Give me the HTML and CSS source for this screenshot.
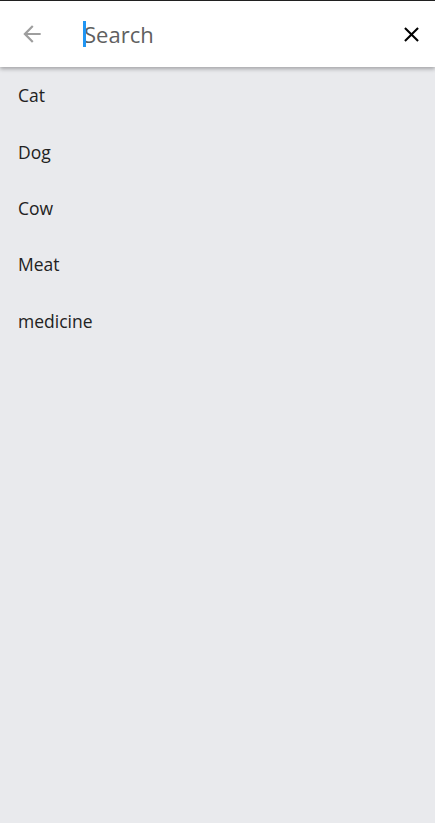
FILE: index.html
```html
<!DOCTYPE html>
<html>
<head>
<meta charset="utf-8">
<link rel="stylesheet" href="styles.css">
</head>
<body>
<div class="app">
  <header class="bar">
    <button class="icon back" aria-label="Back">
      <svg width="26" height="26" viewBox="0 0 24 24"><path d="M20 11H7.83l5.59-5.59L12 4l-8 8 8 8 1.41-1.41L7.83 13H20v-2z" fill="#9e9e9e"/></svg>
    </button>
    <div class="field"><span class="caret"></span><span class="placeholder">Search</span></div>
    <button class="icon close" aria-label="Clear">
      <svg width="25" height="25" viewBox="0 0 24 24"><path d="M19 6.41L17.59 5 12 10.59 6.41 5 5 6.41 10.59 12 5 17.59 6.41 19 12 13.41 17.59 19 19 17.59 13.41 12z" fill="#000"/></svg>
    </button>
  </header>
  <ul class="list">
    <li>Cat</li>
    <li>Dog</li>
    <li>Cow</li>
    <li>Meat</li>
    <li>medicine</li>
  </ul>
</div>
</body>
</html>
```
FILE: styles.css
```css
html, body { margin: 0; padding: 0; height: 100%; }
body { background: #e9eaed; font-family: "Open Sans", "Noto Sans", sans-serif; }
.app { min-height: 100%; border-top: 1px solid #222; box-sizing: border-box; }
.bar {
  height: 66px; background: #fff; display: flex; align-items: center;
  box-shadow: 0 2px 4px rgba(0,0,0,0.3); position: relative; z-index: 1;
}
.icon { border: 0; background: none; padding: 0; display: flex; align-items: center; justify-content: center; width: 26px; height: 26px; }
.back { margin-left: 19px; }
.field { flex: 1; display: flex; align-items: center; margin-left: 38px; position: relative; }
.caret { width: 3px; height: 26px; background: #2196f3; position: absolute; left: 0; top: 50%; transform: translateY(-50%); }
.placeholder { font-size: 22px; color: #606060; margin-left: 1px; }
.close { margin-right: 11px; }
.list { list-style: none; margin: 0; padding: 0; }
.list li { height: 56.4px; display: flex; align-items: center; padding-left: 18px; font-size: 17.5px; color: #222; }
```
